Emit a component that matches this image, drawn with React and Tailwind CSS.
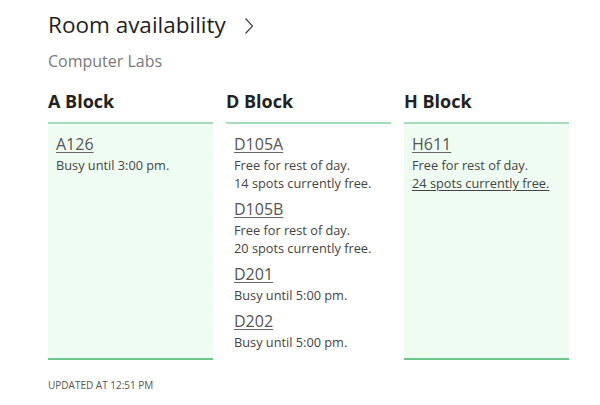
import React from "react";

const blocks = [
  {
    name: "A Block",
    shaded: true,
    rooms: [{ id: "A126", lines: ["Busy until 3:00 pm."] }],
  },
  {
    name: "D Block",
    shaded: false,
    rooms: [
      { id: "D105A", lines: ["Free for rest of day.", "14 spots currently free."] },
      { id: "D105B", lines: ["Free for rest of day.", "20 spots currently free."] },
      { id: "D201", lines: ["Busy until 5:00 pm."] },
      { id: "D202", lines: ["Busy until 5:00 pm."] },
    ],
  },
  {
    name: "H Block",
    shaded: true,
    rooms: [
      { id: "H611", lines: ["Free for rest of day.", "24 spots currently free."], underlineLast: true },
    ],
  },
];

export default function App() {
  return (
    <div
      className="w-[600px] h-[405px] bg-white pl-[48px] pt-[9px]"
      style={{ fontFamily: '"Open Sans", "Liberation Sans", sans-serif' }}
    >
      <div className="flex items-center h-[32px]">
        <h1 className="text-[22.5px] leading-[32px] text-[#1f1f1f] font-normal">Room availability</h1>
        <svg className="ml-[17px] mt-[1px]" width="12" height="18" viewBox="0 0 12 18" fill="none">
          <path d="M2.5 1.5 L9.5 9 L2.5 16.5" stroke="#3a3a3a" strokeWidth="1.1" />
        </svg>
      </div>
      <div className="mt-[9px] text-[16px] leading-[22px] text-[#7a7a7a]">Computer Labs</div>
      <div className="mt-[17px] flex gap-[13px]">
        {blocks.map((b) => (
          <div key={b.name} className="w-[165px] flex flex-col">
            <div className="text-[18px] leading-[24px] font-bold text-[#222] h-[33px]">{b.name}</div>
            <div
              className={
                b.shaded
                  ? "h-[238px] border-t-2 border-b-2 border-t-[#a5dcb9] border-b-[#6cc68b] bg-[#eefcf1] px-[8px] pt-[9px]"
                  : "h-[238px] border-t-2 border-t-[#a5dcb9] px-[8px] pt-[9px]"
              }
            >
              <div className="flex flex-col gap-[6px]">
                {b.rooms.map((r) => (
                  <div key={r.id} className="flex flex-col">
                    <span className="text-[16px] leading-[23px] text-[#555] underline underline-offset-2 decoration-[#666]">
                      {r.id}
                    </span>
                    {r.lines.map((l, i) => (
                      <span
                        key={i}
                        className={
                          r.underlineLast && i === r.lines.length - 1
                            ? "text-[12.75px] leading-[18px] text-[#444] underline underline-offset-2"
                            : "text-[12.75px] leading-[18px] text-[#444]"
                        }
                      >
                        {l}
                      </span>
                    ))}
                  </div>
                ))}
              </div>
            </div>
          </div>
        ))}
      </div>
      <div className="mt-[19px] text-[10px] leading-[12px] text-[#555]">UPDATED AT 12:51 PM</div>
    </div>
  );
}
